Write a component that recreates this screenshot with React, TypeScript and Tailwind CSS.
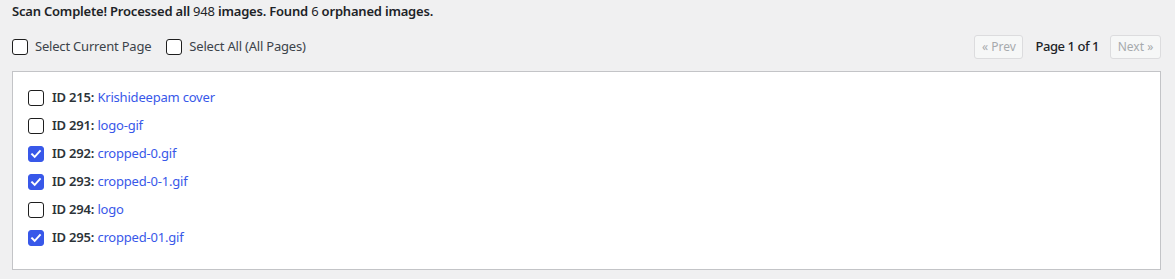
import { useState } from "react";

type Item = { id: number; title: string; checked: boolean };

const ITEMS: Item[] = [
  { id: 215, title: "Krishideepam cover", checked: false },
  { id: 291, title: "logo-gif", checked: false },
  { id: 292, title: "cropped-0.gif", checked: true },
  { id: 293, title: "cropped-0-1.gif", checked: true },
  { id: 294, title: "logo", checked: false },
  { id: 295, title: "cropped-01.gif", checked: true },
];

function Box({ checked, onChange }: { checked: boolean; onChange?: () => void }) {
  return (
    <button
      type="button"
      onClick={onChange}
      className={`grid h-4 w-4 shrink-0 place-items-center rounded-[3px] border ${
        checked ? "border-[#3858e9] bg-[#3858e9]" : "border-[#1e1e1e] bg-white"
      }`}
    >
      {checked ? (
        <svg viewBox="0 0 16 16" className="h-3.5 w-3.5" fill="none">
          <path d="M3.5 8.3l3 3 6-6.6" stroke="white" strokeWidth="2.2" strokeLinecap="square" />
        </svg>
      ) : null}
    </button>
  );
}

export default function App() {
  const [items, setItems] = useState(ITEMS);
  const toggle = (id: number) =>
    setItems((xs) => xs.map((x) => (x.id === id ? { ...x, checked: !x.checked } : x)));

  return (
    <div
      className="h-[279px] bg-[#f0f0f1] pl-3 pr-[14px] text-[13px] tracking-[-0.2px] text-[#3c434a]"
      style={{ fontFamily: '"Noto Sans", "Open Sans", sans-serif' }}
    >
      <p className="pt-[1px] leading-[20px] font-semibold text-[#1d2327]">
        Scan Complete! Processed all <span className="font-normal">948</span> images. Found{" "}
        <span className="font-normal">6</span> orphaned images.
      </p>

      <div className="mt-[14px] flex h-[24px] items-center">
        <label className="flex items-center gap-[7px]">
          <Box checked={false} />
          <span>Select Current Page</span>
        </label>
        <label className="ml-[15px] flex items-center gap-[7px]">
          <Box checked={false} />
          <span>Select All (All Pages)</span>
        </label>
        <div className="ml-auto flex items-center">
          <button className="h-[24px] w-[49px] rounded-[3px] border border-[#dcdcde] bg-[#f6f7f7] text-[12px] tracking-normal text-[#a7aaad]">
            « Prev
          </button>
          <span className="mr-[11px] ml-[12px] font-medium tracking-[-0.45px] text-[#1d2327]">
            Page 1 of 1
          </span>
          <button className="h-[24px] w-[51px] rounded-[3px] border border-[#dcdcde] bg-[#f6f7f7] text-[12px] tracking-normal text-[#a7aaad]">
            Next »
          </button>
        </div>
      </div>

      <div className="mt-[12px] h-[199px] border border-[#c3c4c7] bg-white px-[15px] pt-[12px]">
        {items.map((it) => (
          <div key={it.id} className="flex h-[28px] items-center gap-[8px]">
            <Box checked={it.checked} onChange={() => toggle(it.id)} />
            <span>
              <span className="font-semibold text-[#2c3338]">ID {it.id}:</span>{" "}
              <a className="text-[#3858e9]" href="#">
                {it.title}
              </a>
            </span>
          </div>
        ))}
      </div>
    </div>
  );
}
